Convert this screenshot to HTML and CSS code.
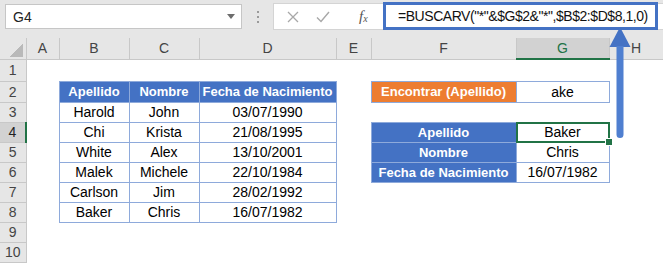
FILE: index.html
```html
<!DOCTYPE html>
<html lang="es">
<head>
    <meta charset="UTF-8">
    <title>BUSCARV comodín</title>
    <link rel="stylesheet" href="styles.css">
</head>
<body>

<div class="app">
    <div class="topbar">
        <div class="namebox">
            <span>G4</span>
            <svg class="caret" width="8" height="5" viewBox="0 0 8 5"><path d="M0 0h8L4 5z" fill="#6d6d6d"/></svg>
        </div>
        <div class="grip"><i></i><i></i><i></i></div>
        <div class="formula">
            <svg class="fbtn" width="12" height="12" viewBox="0 0 12 12"><path d="M1 1L11 11M11 1L1 11" stroke="#a8a8a8" stroke-width="1.3" fill="none"/></svg>
            <svg class="fbtn" width="14" height="12" viewBox="0 0 14 12"><path d="M1 6.5L5 10.5L13 1" stroke="#a8a8a8" stroke-width="1.4" fill="none"/></svg>
            <span class="fx">f<sub>x</sub></span>
            <div class="input">=BUSCARV("*"&amp;$G$2&amp;"*",$B$2:$D$8,1,0)</div>
        </div>
    </div>

    <table class="sheet">
        <colgroup>
            <col style="width:26px"><col style="width:33px"><col style="width:70px"><col style="width:70px">
            <col style="width:137px"><col style="width:35px"><col style="width:145px"><col style="width:93px"><col style="width:54px">
        </colgroup>
        <tr class="hdr">
            <th class="corner"></th><th>A</th><th>B</th><th>C</th><th>D</th><th>E</th><th>F</th><th class="active-col">G</th><th>H</th>
        </tr>
        <tr class="r1"><th>1</th><td></td><td></td><td></td><td></td><td></td><td></td><td></td><td></td></tr>
        <tr class="r2">
            <th>2</th><td></td>
            <td class="th-blue">Apellido</td><td class="th-blue">Nombre</td><td class="th-blue">Fecha de Nacimiento</td>
            <td></td><td class="th-orange">Encontrar (Apellido)</td><td class="box">ake</td><td></td>
        </tr>
        <tr><th>3</th><td></td><td class="box">Harold</td><td class="box">John</td><td class="box">03/07/1990</td><td></td><td></td><td></td><td></td></tr>
        <tr><th class="active-row">4</th><td></td><td class="box">Chi</td><td class="box">Krista</td><td class="box">21/08/1995</td><td></td><td class="th-blue">Apellido</td><td class="box sel">Baker</td><td></td></tr>
        <tr><th>5</th><td></td><td class="box">White</td><td class="box">Alex</td><td class="box">13/10/2001</td><td></td><td class="th-blue">Nombre</td><td class="box">Chris</td><td></td></tr>
        <tr><th>6</th><td></td><td class="box">Malek</td><td class="box">Michele</td><td class="box">22/10/1984</td><td></td><td class="th-blue">Fecha de Nacimiento</td><td class="box">16/07/1982</td><td></td></tr>
        <tr><th>7</th><td></td><td class="box">Carlson</td><td class="box">Jim</td><td class="box">28/02/1992</td><td></td><td></td><td></td><td></td></tr>
        <tr><th>8</th><td></td><td class="box">Baker</td><td class="box">Chris</td><td class="box">16/07/1982</td><td></td><td></td><td></td><td></td></tr>
        <tr><th>9</th><td></td><td></td><td></td><td></td><td></td><td></td><td></td><td></td></tr>
        <tr><th>10</th><td></td><td></td><td></td><td></td><td></td><td></td><td></td><td></td></tr>
    </table>

    <!-- flecha que apunta a la barra de fórmulas -->
    <svg class="arrow" width="24" height="114" viewBox="0 0 24 114">
        <path d="M12 1L1.5 21H22.5Z" fill="#4472c4"/>
        <path d="M8.5 20H15.5V108.5A3.5 3.5 0 0 1 8.5 108.5Z" fill="#4f7fd0"/>
    </svg>
</div>

</body>
</html>
```

FILE: styles.css
```css
body {
    margin: 0;
    font-family: 'Liberation Sans', Arial, sans-serif;
    background-color: #fff;
    color: #000;
}
.app {
    position: relative;
    width: 663px;
    height: 264px;
    overflow: hidden;
}
.topbar {
    height: 38px;
    background-color: #e6e6e6;
    display: flex;
    align-items: flex-start;
    box-sizing: border-box;
}
.namebox {
    margin: 4px 0 0 5px;
    width: 237px;
    height: 25px;
    box-sizing: border-box;
    background-color: #fff;
    border: 1px solid #c6c6c6;
    display: flex;
    align-items: center;
    justify-content: space-between;
    padding: 0 6px 0 7px;
    font-size: 14px;
    color: #222;
}
.grip {
    width: 31px;
    display: flex;
    flex-direction: column;
    align-items: center;
    gap: 3px;
    padding-top: 11px;
}
.grip i {
    width: 2px;
    height: 2px;
    background-color: #9a9a9a;
}
.formula {
    margin-top: 3px;
    height: 25px;
    flex: 1;
    background-color: #fff;
    border: 1px solid #d4d4d4;
    border-right: none;
    display: flex;
    align-items: center;
    padding-left: 13px;
    position: relative;
}
.fbtn {
    margin-right: 17px;
}
.fx {
    font-family: 'Liberation Serif', serif;
    font-style: italic;
    font-size: 15px;
    color: #555;
    margin-left: 12px;
}
.fx sub {
    font-size: 10px;
    vertical-align: -1px;
}
.input {
    position: absolute;
    left: 109px;
    top: -2px;
    width: 275px;
    height: 28px;
    box-sizing: border-box;
    border: 3px solid #4472c4;
    background-color: #fff;
    font-size: 14px;
    letter-spacing: -0.45px;
    padding-left: 12px;
    line-height: 22px;
    color: #111;
    white-space: nowrap;
}
.sheet {
    border-collapse: collapse;
    table-layout: fixed;
    width: 663px;
    font-size: 14px;
}
.sheet th {
    background-color: #e6e6e6;
    color: #444;
    font-weight: normal;
    border-right: 1px solid #c8c8c8;
    border-bottom: 1px solid #c8c8c8;
    padding: 0;
    text-align: center;
}
.sheet td {
    padding: 0;
    text-align: center;
    white-space: nowrap;
    overflow: visible;
}
.sheet tr {
    height: 20px;
}
.sheet .hdr {
    height: 21px;
}
.sheet .r1 {
    height: 22px;
}
.sheet .r2 {
    height: 21px;
}
.corner {
    background-image: linear-gradient(135deg, transparent 50%, #b9b9b9 50%);
    background-size: 14px 13px;
    background-position: right 3px bottom 2px;
    background-repeat: no-repeat;
}
.sheet th.active-col {
    background-color: #d2d2d2;
    color: #217346;
    border-bottom: 2px solid #217346;
}
.sheet th.active-row {
    background-color: #d2d2d2;
    color: #222;
    border-right: 2px solid #217346;
}
.box {
    border: 1px solid #8eaadb;
}
.th-blue {
    background-color: #4472c4;
    color: #fff;
    font-weight: bold;
    font-size: 13px;
    border: 1px solid #8eaadb;
}
.th-orange {
    background-color: #ed7d31;
    color: #fff;
    font-weight: bold;
    font-size: 13px;
    border: 1px solid #8eaadb;
}
.sel {
    position: relative;
}
.sel::after {
    content: "";
    position: absolute;
    left: -1px;
    top: -1px;
    right: -1px;
    bottom: -1px;
    border: 2px solid #217346;
}
.sel::before {
    content: "";
    position: absolute;
    right: -4px;
    bottom: -4px;
    width: 6px;
    height: 6px;
    background-color: #217346;
    border: 1px solid #fff;
    z-index: 1;
}
.arrow {
    position: absolute;
    left: 608px;
    top: 26px;
}
```
